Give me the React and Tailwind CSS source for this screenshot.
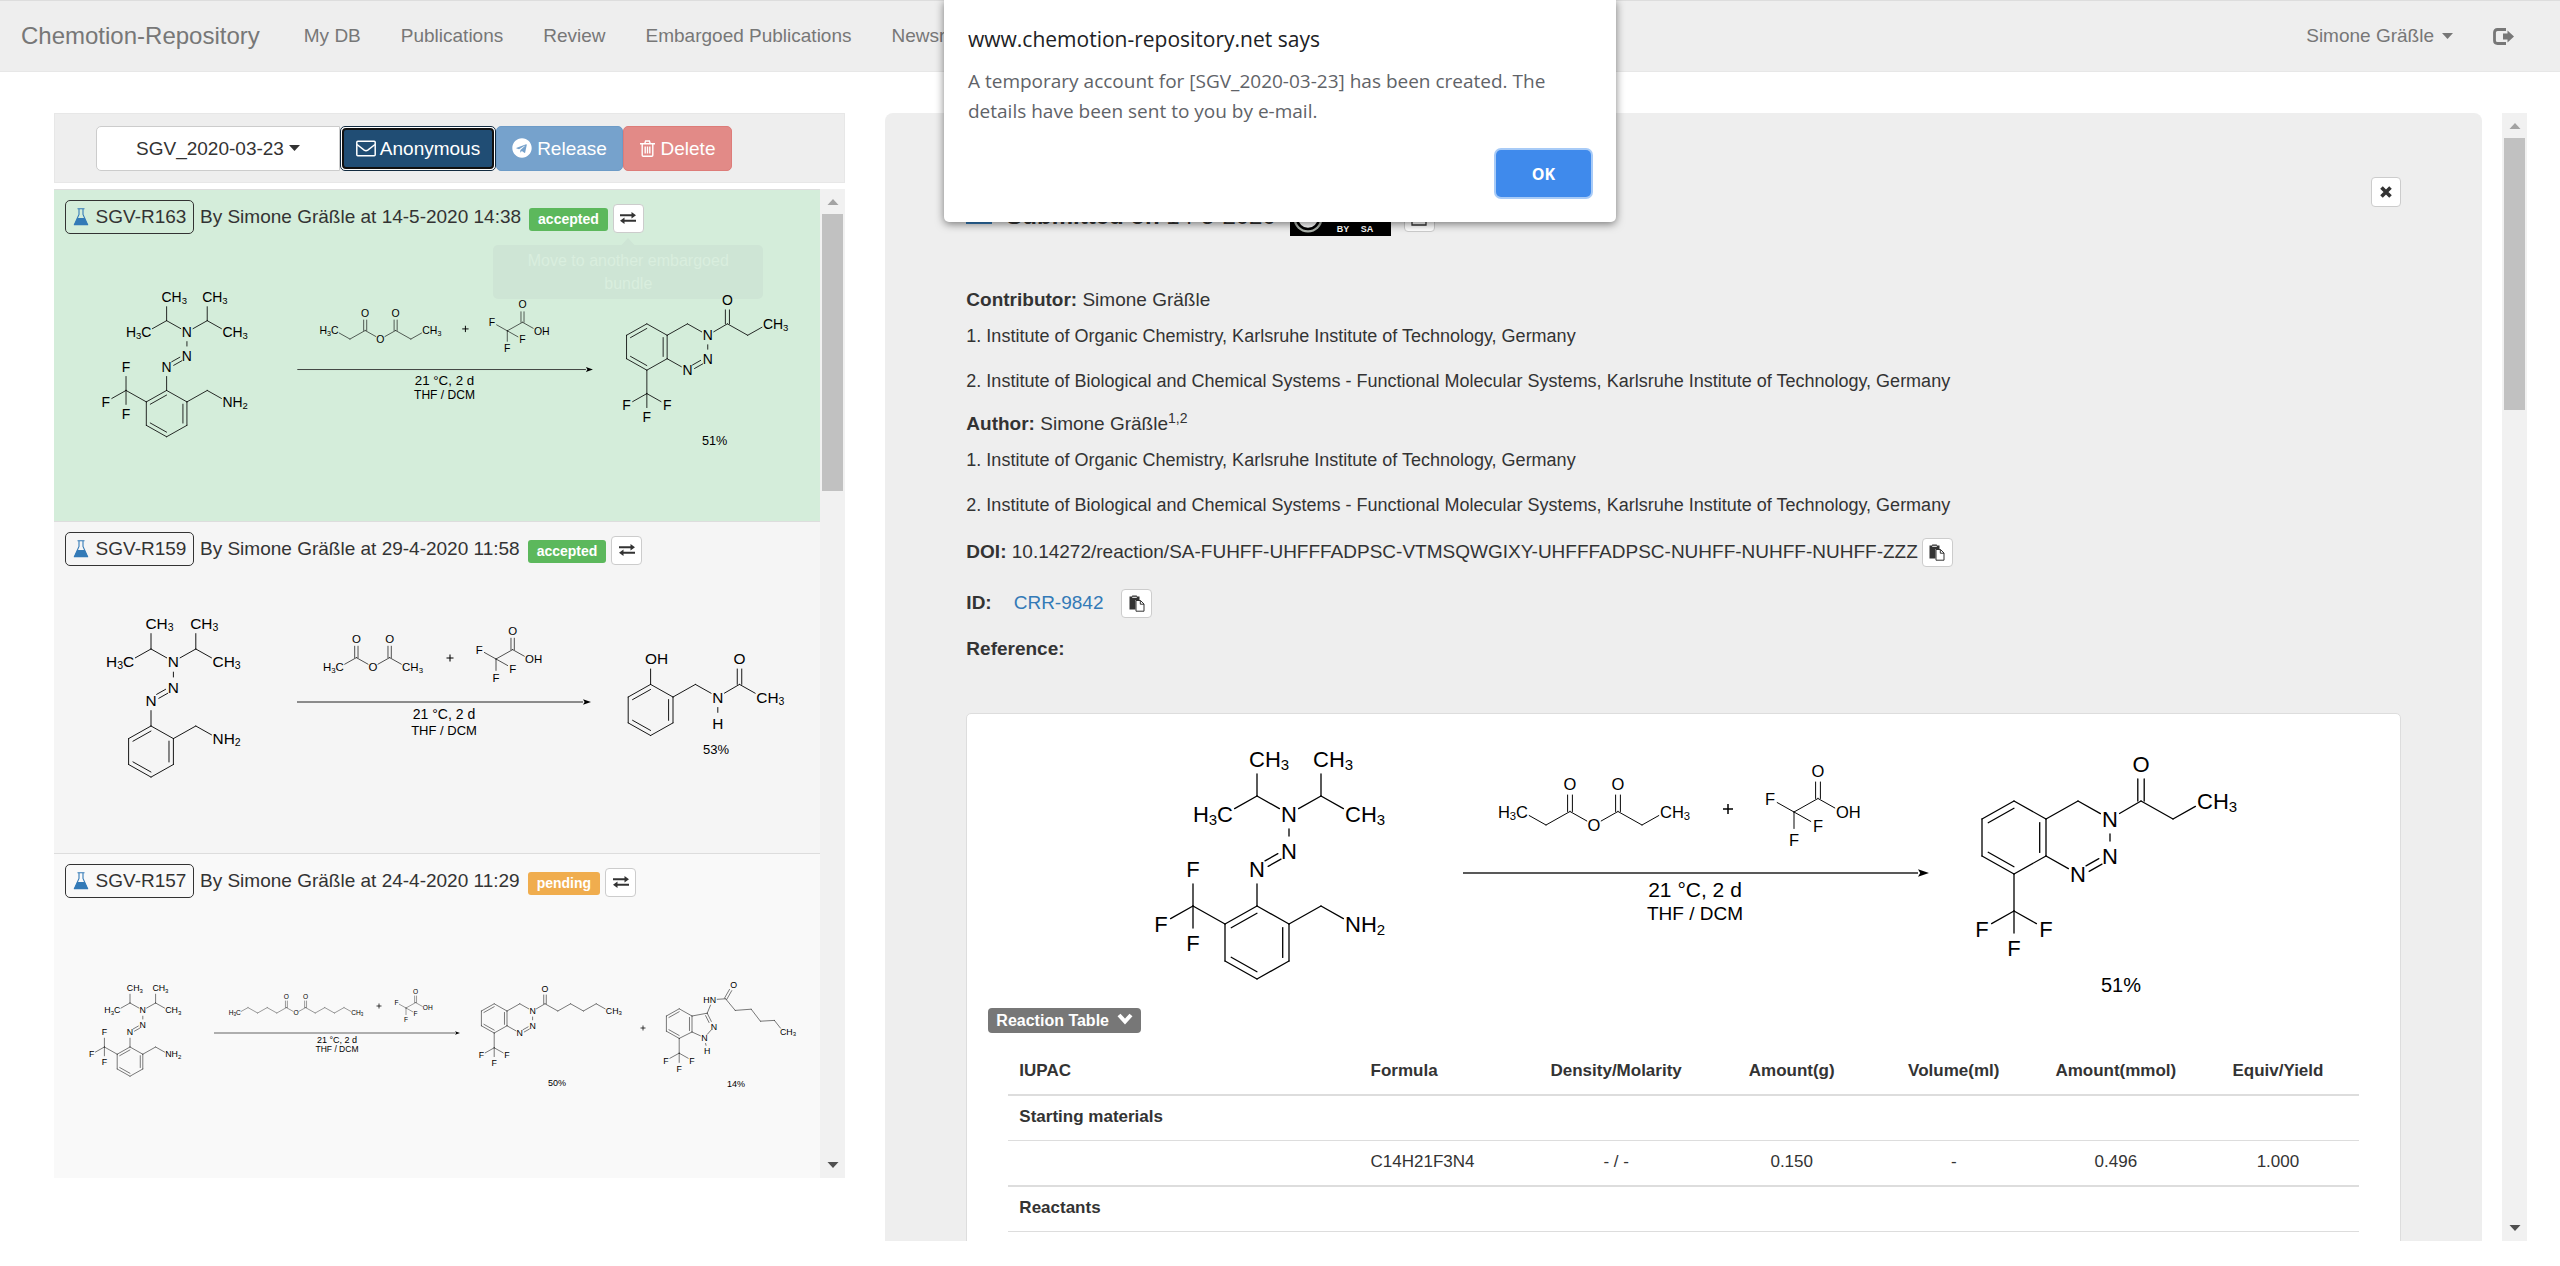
import React from "react";
import { FaTelegram } from "react-icons/fa";

/* ---------- skeletal formula drawing ---------- */

const DX = 32;
const H = 18;

// Atoms: [x, y, label]. Bonds: [from, to, kind]; kind "d" is a symmetric double
// bond, "r" a double bond with its second stroke on the right of its direction.
const triazene = {
  atoms: {
    c1: [0, 0], c2: [DX, H], c3: [DX, 55], c4: [0, 73], c5: [-DX, 55], c6: [-DX, H],
    n1: [0, -37, "N"], n2: [DX, -55, "N"], n3: [DX, -92, "N"],
    a: [0, -110], a1: [0, -147, "CH3"], a2: [-DX, -92, "H3C"],
    b: [64, -110], b1: [64, -147, "CH3"], b2: [96, -92, "CH3"],
    m: [64, 0], nh: [96, H, "NH2"],
  },
  bonds: [
    ["c6", "c1", "r"], ["c1", "c2"], ["c2", "c3", "r"], ["c3", "c4"], ["c4", "c5", "r"], ["c5", "c6"],
    ["c1", "n1"], ["n1", "n2", "d"], ["n2", "n3"], ["n3", "a"], ["a", "a1"], ["a", "a2"],
    ["n3", "b"], ["b", "b1"], ["b", "b2"], ["c2", "m"], ["m", "nh"],
  ],
};

const triazeneCF3 = {
  atoms: { ...triazene.atoms, f: [-64, 0], f1: [-64, -37, "F"], f2: [-96, H, "F"], f3: [-64, 37, "F"] },
  bonds: [...triazene.bonds, ["c6", "f"], ["f", "f1"], ["f", "f2"], ["f", "f3"]],
};

function anhydride(carbons) {
  const atoms = {
    o: [0, 0, "O"], l1: [-DX, -H], lo: [-DX, -55, "O"], r1: [DX, -H], ro: [DX, -55, "O"],
  };
  const bonds = [["o", "l1"], ["o", "r1"], ["l1", "lo", "d"], ["r1", "ro", "d"]];
  for (let i = 2; i <= carbons; i++) {
    const y = i % 2 ? -H : 0;
    const last = i === carbons;
    atoms["l" + i] = last ? [-DX * i, y, "H3C"] : [-DX * i, y];
    atoms["r" + i] = last ? [DX * i, y, "CH3"] : [DX * i, y];
    bonds.push(["l" + (i - 1), "l" + i], ["r" + (i - 1), "r" + i]);
  }
  return { atoms, bonds };
}

const tfa = {
  atoms: {
    c: [0, 0], c2: [DX, -H], o: [DX, -55, "O"], oh: [64, 0, "OH"],
    f1: [-DX, -H, "F"], f2: [DX, H, "F"], f3: [0, 37, "F"],
  },
  bonds: [["c", "c2"], ["c2", "o", "d"], ["c2", "oh"], ["c", "f1"], ["c", "f2"], ["c", "f3"]],
};

function benzotriazine(carbons) {
  const atoms = {
    c1: [0, 0], c2: [-DX, -H], c3: [-64, 0], c4: [-64, 37], c5: [-DX, 55], c6: [0, 37],
    m: [DX, -H], n1: [64, 0, "N"], n2: [64, 37, "N"], n3: [DX, 55, "N"],
    f: [-DX, 92], f1: [-64, 110, "F"], f2: [0, 110, "F"], f3: [-DX, 129, "F"],
    k1: [95, -H], ko: [95, -55, "O"],
  };
  const bonds = [
    ["c3", "c2", "r"], ["c2", "c1"], ["c1", "c6", "r"], ["c6", "c5"], ["c5", "c4", "r"], ["c4", "c3"],
    ["c1", "m"], ["m", "n1"], ["n1", "n2"], ["n2", "n3", "d"], ["n3", "c6"],
    ["c5", "f"], ["f", "f1"], ["f", "f2"], ["f", "f3"],
    ["n1", "k1"], ["k1", "ko", "d"],
  ];
  for (let i = 2; i <= carbons; i++) {
    const p = [95 + DX * (i - 1), i % 2 ? -H : 0];
    atoms["k" + i] = i === carbons ? [...p, "CH3"] : p;
    bonds.push(["k" + (i - 1), "k" + i]);
  }
  return { atoms, bonds };
}

const indazole = {
  atoms: {
    c1: [0, 0], c2: [-DX, -H], c3: [-64, 0], c4: [-64, 38], c5: [-DX, 56], c6: [0, 40],
    d: [38, -7], n2: [55, 27, "N"], n1: [31, 54, "N"], h: [38, 88, "H"],
    n: [52, -41, "HN"], k: [84, -43], ko: [104, -78, "O"],
    k2: [108, -14], k3: [148, -17], k4: [171, 13], k5: [206, 11], k6: [228, 39, "CH3"],
    f: [-DX, 93], f1: [-65, 111, "F"], f2: [0, 111, "F"], f3: [-DX, 131, "F"],
  },
  bonds: [
    ["c3", "c2", "r"], ["c2", "c1"], ["c1", "c6", "r"], ["c6", "c5"], ["c5", "c4", "r"], ["c4", "c3"],
    ["c1", "d"], ["d", "n2", "r"], ["n2", "n1"], ["n1", "c6"], ["n1", "h"],
    ["d", "n"], ["n", "k"], ["k", "ko", "d"], ["k", "k2"], ["k2", "k3"], ["k3", "k4"], ["k4", "k5"], ["k5", "k6"],
    ["c5", "f"], ["f", "f1"], ["f", "f2"], ["f", "f3"],
  ],
};

const hydroxybenzylAcetamide = {
  atoms: {
    c1: [0, 0], c2: [-DX, -H], c3: [-64, 0], c4: [-64, 37], c5: [-DX, 55], c6: [0, 37],
    oh: [-DX, -55, "OH"], m: [DX, -H], n: [64, 0, "N"], h: [64, 37, "H"],
    k: [95, -H], ko: [95, -55, "O"], k2: [127, 0, "CH3"],
  },
  bonds: [
    ["c3", "c2", "r"], ["c2", "c1"], ["c1", "c6", "r"], ["c6", "c5"], ["c5", "c4", "r"], ["c4", "c3"],
    ["c2", "oh"], ["c1", "m"], ["m", "n"], ["n", "h"], ["n", "k"], ["k", "ko", "d"], ["k", "k2"],
  ],
};

function AtomLabel({ x, y, label, s }) {
  const sub = { fontSize: 15 * s, dy: 3 * s };
  const base = { y: y + 8 * s, fontSize: 22 * s };
  if (label === "H3C" || label === "HN") {
    return (
      <text x={x + 8 * s} {...base} textAnchor="end">
        H{label === "H3C" && <tspan {...sub}>3</tspan>}
        <tspan dy={label === "H3C" ? -3 * s : 0}>{label === "H3C" ? "C" : "N"}</tspan>
      </text>
    );
  }
  if (label.length > 1) {
    return (
      <text x={x - 8 * s} {...base}>
        {label.slice(0, 2)}
        {label.length > 2 && <tspan {...sub}>{label.slice(2)}</tspan>}
      </text>
    );
  }
  return <text x={x} {...base} textAnchor="middle">{label}</text>;
}

function Molecule({ data, x, y, s = 1 }) {
  const lines = [];
  data.bonds.forEach(([from, to, kind]) => {
    const a = data.atoms[from];
    const b = data.atoms[to];
    const len = Math.hypot(b[0] - a[0], b[1] - a[1]);
    const ux = (b[0] - a[0]) / len;
    const uy = (b[1] - a[1]) / len;
    const trim = Math.abs(uy) > 0.85 ? 15 : 11;
    const ta = a[2] ? trim : 0;
    const tb = b[2] ? trim : 0;
    const seg = (off, cut) => {
      const ca = ta || cut;
      const cb = tb || cut;
      lines.push([
        a[0] + ux * ca - uy * off, a[1] + uy * ca + ux * off,
        b[0] - ux * cb - uy * off, b[1] - uy * cb + ux * off,
      ]);
    };
    if (kind === "d") {
      seg(-3.2, 0);
      seg(3.2, 0);
    } else {
      seg(0, 0);
      if (kind === "r") seg(6.3, 3.6);
    }
  });
  return (
    <g>
      <g stroke="#000" strokeWidth={1.3 * s} strokeLinecap="round">
        {lines.map((l, i) => (
          <line key={i} x1={x + l[0] * s} y1={y + l[1] * s} x2={x + l[2] * s} y2={y + l[3] * s} />
        ))}
      </g>
      {Object.entries(data.atoms).map(([id, [ax, ay, label]]) =>
        label ? <AtomLabel key={id} x={x + ax * s} y={y + ay * s} label={label} s={s} /> : null
      )}
    </g>
  );
}

function Plus({ x, y, r }) {
  return <path d={`M${x - r} ${y}h${2 * r}M${x} ${y - r}v${2 * r}`} stroke="#000" strokeWidth={r * 0.3} fill="none" />;
}

function Arrow({ x1, x2, y, head, width = 1.3 }) {
  return (
    <g>
      <path d={`M${x1} ${y}H${x2 - head}`} stroke="#222" strokeWidth={width} />
      <path d={`M${x2} ${y}l${-head} ${-head * 0.35}l${head * 0.2} ${head * 0.35}l${-head * 0.2} ${head * 0.35}z`} />
    </g>
  );
}

function Caption({ x, y, size, children }) {
  return <text x={x} y={y} fontSize={size} textAnchor="middle">{children}</text>;
}

function Scheme({ viewBox, className, title, children }) {
  return (
    <svg viewBox={viewBox} className={className} role="img" aria-label={title} fontFamily="'Liberation Sans', Arial, sans-serif">
      {children}
    </svg>
  );
}

function Scheme163({ viewBox, className }) {
  return (
    <Scheme viewBox={viewBox} className={className} title="Reaction SGV-R163">
      <Molecule data={triazeneCF3} x={1257} y={906} />
      <Molecule data={anhydride(3)} x={1594} y={825} s={0.75} />
      <Plus x={1728} y={809} r={5} />
      <Molecule data={tfa} x={1794} y={812} s={0.75} />
      <Arrow x1={1463} x2={1929} y={873} head={11} />
      <Caption x={1695} y={897} size={21}>21 °C, 2 d</Caption>
      <Caption x={1695} y={920} size={19}>THF / DCM</Caption>
      <Molecule data={benzotriazine(3)} x={2046} y={819} />
      <Caption x={2121} y={992} size={20}>51%</Caption>
    </Scheme>
  );
}

function Scheme159({ className }) {
  return (
    <Scheme viewBox="66 607 741 200" className={className} title="Reaction SGV-R159">
      <Molecule data={triazene} x={150} y={726} s={0.7} />
      <Molecule data={anhydride(2)} x={372} y={667} s={0.52} />
      <Plus x={449} y={658} r={3.5} />
      <Molecule data={tfa} x={495} y={659} s={0.52} />
      <Arrow x1={296} x2={590} y={702} head={8} width={1} />
      <Caption x={443} y={719} size={14}>21 °C, 2 d</Caption>
      <Caption x={443} y={735} size={13}>THF / DCM</Caption>
      <Molecule data={hydroxybenzylAcetamide} x={672} y={697} s={0.7} />
      <Caption x={715} y={754} size={13}>53%</Caption>
    </Scheme>
  );
}

function Scheme157({ className }) {
  return (
    <Scheme viewBox="66 939 741 200" className={className} title="Reaction SGV-R157">
      <Molecule data={triazeneCF3} x={129} y={1047} s={0.4} />
      <Molecule data={anhydride(6)} x={295} y={1013} s={0.3} />
      <Plus x={378} y={1006} r={2.5} />
      <Molecule data={tfa} x={405} y={1008} s={0.3} />
      <Arrow x1={213} x2={459} y={1033} head={5} width={0.7} />
      <Caption x={336} y={1043} size={9}>21 °C, 2 d</Caption>
      <Caption x={336} y={1052} size={8.5}>THF / DCM</Caption>
      <Molecule data={benzotriazine(6)} x={506} y={1011} s={0.4} />
      <Caption x={556} y={1086} size={9}>50%</Caption>
      <Plus x={642} y={1028} r={2.5} />
      <Molecule data={indazole} x={691} y={1016} s={0.4} />
      <Caption x={735} y={1087} size={9}>14%</Caption>
    </Scheme>
  );
}

/* ---------- icons ---------- */

const Caret = ({ className }) => (
  <svg viewBox="0 0 11 6" className={className} fill="currentColor" aria-hidden="true"><path d="M0 0h11L5.500 6z" /></svg>
);
const FlaskIcon = () => (
  <svg viewBox="0 0 16 18" className="h-[18px] w-4" aria-hidden="true">
    <path d="M4.500 .7h7M6 1v5.500L1.500 16.500h13L10 6.500V1" fill="none" stroke="#337ab7" strokeWidth="1.100" />
    <path d="M4.200 10h7.600L15.200 17.300H.8z" fill="#337ab7" />
  </svg>
);
const SwapIcon = () => (
  <svg viewBox="0 0 16 12" className="h-3 w-4" fill="#333" aria-hidden="true">
    <path d="M0 2.200h11.500V0L16 3.200l-4.500 3.200V4.200H0zM16 7.800H4.500V5.600L0 8.800 4.500 12V9.800H16z" />
  </svg>
);
const EnvelopeIcon = () => (
  <svg viewBox="0 0 20 17" className="h-[17px] w-5" fill="none" stroke="#fff" strokeWidth="1.500" aria-hidden="true">
    <rect x=".8" y="1.300" width="18.400" height="14.500" rx="1" />
    <path d="M1 4.500l7.200 5.700q1.800 1.200 3.600 0L19 4.500" />
  </svg>
);
const TrashIcon = () => (
  <svg viewBox="0 0 15 17" className="h-[17px] w-[15px]" fill="none" stroke="#fff" strokeWidth="1.400" aria-hidden="true">
    <path d="M0 3.700h15M4.800 3.500l.8-2.500h3.800l.8 2.500M2.200 4v11.200q0 1 1 1h8.600q1 0 1-1V4M5.200 6.500v7M7.500 6.500v7M9.800 6.500v7" />
  </svg>
);
const CopyIcon = () => (
  <svg viewBox="0 0 16 17" className="h-[17px] w-4" aria-hidden="true">
    <path d="M.5 1.500h2.300l.5-1h4.400l.5 1h2.300V5H6.500v9.500h-6z" fill="#333" />
    <path d="M3.200 2.300h4.600" stroke="#fff" strokeWidth="1" />
    <path d="M7 5.500h4.500L15 9v7.200H7z" fill="#fff" stroke="#333" />
    <path d="M11.300 5.500V9.200H15" fill="none" stroke="#333" />
  </svg>
);
const CloseIcon = () => (
  <svg viewBox="0 0 12 12" className="size-3" stroke="#333" strokeWidth="3.600" aria-hidden="true">
    <path d="M1.500 1.500l9 9M10.500 1.500l-9 9" />
  </svg>
);
const LogoutIcon = () => (
  <svg viewBox="0 0 21 17" className="h-[17px] w-[21px]" aria-hidden="true">
    <path d="M13 1.500H4.500q-3 0-3 3v8q0 3 3 3H13" fill="none" stroke="#777" strokeWidth="2.800" />
    <path d="M10 5.500h4.500V2.500L21 8.500l-6.500 6v-3H10z" fill="#777" />
  </svg>
);
const ChevronDown = () => (
  <svg viewBox="0 0 16 12" className="mb-1 h-3 w-4" fill="none" stroke="#fff" strokeWidth="4" aria-hidden="true">
    <path d="M2 2l6 6.500L14 2" />
  </svg>
);
const ExportIcon = () => (
  <svg viewBox="0 0 16 16" className="size-4" fill="none" stroke="#333" strokeWidth="1.300" aria-hidden="true">
    <path d="M1 5v10h14V5M8 1v9M5 7l3 3.500L11 7" />
  </svg>
);
const LicenseBadge = () => (
  <svg viewBox="0 0 101 36" className="h-9 w-[101px]" role="img" aria-label="CC BY-SA">
    <rect width="101" height="36" />
    <rect x="1" y="1" width="99" height="21" fill="#abb1aa" />
    <circle cx="18" cy="18" r="14.500" fill="#abb1aa" />
    <circle cx="18" cy="18" r="11" fill="#fff" stroke="#000" strokeWidth="2.500" />
    <circle cx="53" cy="12" r="8" fill="#fff" stroke="#000" strokeWidth="1.500" />
    <circle cx="77" cy="12" r="8" fill="#fff" stroke="#000" strokeWidth="1.500" />
    <path d="M53 6v11M74 9q5-4 6 3t-6 3" fill="none" stroke="#000" strokeWidth="2.500" />
    <text x="53" y="32" fontSize="9" fontWeight="bold" fill="#fff" textAnchor="middle">BY</text>
    <text x="77" y="32" fontSize="9" fontWeight="bold" fill="#fff" textAnchor="middle">SA</text>
  </svg>
);

/* ---------- page parts ---------- */

const smallButton = "flex h-[29px] w-[31px] items-center justify-center rounded-sm border border-[#ccc] bg-white";

function ScrollBar({ thumb }) {
  return (
    <div className="flex h-full w-[25px] shrink-0 flex-col items-center bg-[#f1f1f1] py-2.5" aria-hidden="true">
      <Caret className="h-1.5 w-3 rotate-180 text-[#a3a3a3]" />
      <div className={"mt-[9px] w-[21px] bg-[#c1c1c1] " + thumb} />
      <Caret className="mt-auto h-1.5 w-3 text-[#505050]" />
    </div>
  );
}

function NavBar() {
  return (
    <nav className="flex h-[71px] shrink-0 items-center gap-10 border-b border-[#e7e7e7] bg-[#eee] pr-[46px] pl-[21px] text-[19px] text-[#777]">
      <a href="#home" className="mr-1 text-[24px]">Chemotion-Repository</a>
      <a href="#mydb">My DB</a>
      <a href="#publications">Publications</a>
      <a href="#review">Review</a>
      <a href="#embargoed">Embargoed Publications</a>
      <a href="#newsroom">Newsroom</a>
      <button type="button" className="ml-auto flex items-center gap-2">
        Simone Gräßle <Caret className="h-1.5 w-[11px]" />
      </button>
      <a href="#logout" aria-label="Log out"><LogoutIcon /></a>
    </nav>
  );
}

function Toolbar() {
  return (
    <div className="flex h-[70px] shrink-0 items-center border border-[#e7e7e7] bg-[#eee] pl-[41px] text-[19px] leading-[27px]">
      <button type="button" className="flex h-[45px] w-[244px] items-center justify-center gap-[5px] rounded-l-[5px] border border-[#ccc] bg-white text-[#333]">
        SGV_2020-03-23 <Caret className="h-1.5 w-[11px]" />
      </button>
      <button type="button" className="flex h-[45px] w-[156px] items-center justify-center gap-1 rounded-[5px] border border-[#122b40] bg-white p-px text-white">
        <span className="flex h-full w-full items-center justify-center gap-1 rounded-[4px] border-2 border-[#101010] bg-[#204d74]">
          <EnvelopeIcon /> Anonymous
        </span>
      </button>
      <button type="button" className="flex h-[45px] w-[127px] items-center justify-center gap-[5px] rounded-[5px] border border-[#6d9bc7] bg-[#76a2cc] text-white">
        <FaTelegram className="size-5" /> Release
      </button>
      <button type="button" className="flex h-[45px] w-[109px] items-center justify-center gap-1.5 rounded-[5px] border border-[#dd7c79] bg-[#e28a87] text-white">
        <TrashIcon /> Delete
      </button>
    </div>
  );
}

function ReactionItem({ id, date, status, bg, tooltip, children }) {
  return (
    <article className={"h-[332px] shrink-0 border-t border-[#ddd] pt-2.5 " + bg}>
      <div className="flex h-[34px] items-center pl-[11px] text-[19px] text-[#333]">
        <a href={"#" + id} className="flex h-[34px] w-[129px] items-center justify-center gap-[7px] rounded-[5px] border border-[#333]">
          <FlaskIcon /> {id}
        </a>
        <span className="ml-1.5">By Simone Gräßle at {date}</span>
        <span className={"mt-[5px] ml-2 flex h-[23px] items-center rounded-[3px] px-[9px] text-[14px] font-bold text-white " + (status === "accepted" ? "bg-[#5cb85c]" : "bg-[#f0ad4e]")}>
          {status}
        </span>
        <div className="relative mt-0.5 ml-[5px]">
          <button type="button" aria-label="Move to another embargoed bundle" className={smallButton}><SwapIcon /></button>
          {tooltip && (
            <div role="tooltip" className="absolute top-[34px] left-1/2 flex w-[270px] -translate-x-1/2 flex-col items-center">
              <Caret className="h-[7px] w-3.5 rotate-180 text-[#cee5d5]" />
              <p className="w-full rounded-[5px] bg-[#cee5d5] px-4 py-1 text-center text-[16px] leading-[23px] text-[#d9eede]">{tooltip}</p>
            </div>
          )}
        </div>
      </div>
      <div className="relative z-10 mt-[41px] flex justify-center">{children}</div>
    </article>
  );
}

function ReactionList() {
  return (
    <div className="flex h-[989px]">
      <div className="flex min-w-0 flex-1 flex-col overflow-hidden">
        <ReactionItem id="SGV-R163" date="14-5-2020 14:38" status="accepted" bg="bg-[#d4edda]" tooltip="Move to another embargoed bundle">
          <Scheme163 viewBox="1100 724 1168 315" className="w-[741px] max-w-full" />
        </ReactionItem>
        <ReactionItem id="SGV-R159" date="29-4-2020 11:58" status="accepted" bg="bg-[#f5f5f5]">
          <Scheme159 className="w-[741px] max-w-full" />
        </ReactionItem>
        <ReactionItem id="SGV-R157" date="24-4-2020 11:29" status="pending" bg="bg-[#f9f9f9]">
          <Scheme157 className="w-[741px] max-w-full" />
        </ReactionItem>
      </div>
      <ScrollBar thumb="h-[277px]" />
    </div>
  );
}

const affiliations = [
  "1. Institute of Organic Chemistry, Karlsruhe Institute of Technology, Germany",
  "2. Institute of Biological and Chemical Systems - Functional Molecular Systems, Karlsruhe Institute of Technology, Germany",
];

function Affiliations() {
  return (
    <div className="mt-[11px] flex flex-col gap-[21px] text-[18px] leading-6">
      {affiliations.map((a) => <p key={a}>{a}</p>)}
    </div>
  );
}

const columns = [
  ["IUPAC", "w-[26%] text-left"],
  ["Formula", "w-[12%] text-left"],
  ["Density/Molarity", "w-[14%] text-center"],
  ["Amount(g)", "w-[12%] text-center"],
  ["Volume(ml)", "w-[12%] text-center"],
  ["Amount(mmol)", "w-[12%] text-center"],
  ["Equiv/Yield", "w-[12%] text-center"],
];
const starting = ["", "C14H21F3N4", "- / -", "0.150", "-", "0.496", "1.000"];

function ReactionTable() {
  return (
    <table className="w-full table-fixed border-separate border-spacing-0 text-[17px] leading-6">
      <thead>
        <tr>
          {columns.map(([name, cls]) => (
            <th key={name} scope="col" className={"border-b-2 border-[#ddd] px-[11px] pt-3 pb-[11px] font-bold " + cls}>{name}</th>
          ))}
        </tr>
      </thead>
      <tbody>
        <tr>
          <th colSpan={7} scope="colgroup" className="border-b border-[#ddd] px-[11px] pt-[9px] pb-[11px] text-left font-bold">Starting materials</th>
        </tr>
        <tr>
          {starting.map((v, i) => (
            <td key={i} className={"border-b-2 border-[#ddd] px-[11px] pt-[9px] pb-[11px] " + (i < 2 ? "text-left" : "text-center")}>{v}</td>
          ))}
        </tr>
        <tr>
          <th colSpan={7} scope="colgroup" className="border-b border-[#ddd] px-[11px] pt-[9px] pb-[11px] text-left font-bold">Reactants</th>
        </tr>
      </tbody>
    </table>
  );
}

function DetailPanel() {
  return (
    <section className="min-w-0 flex-1 overflow-hidden rounded-t-lg bg-[#eee] px-[81px] pt-16 text-[19px] leading-[27px] text-[#333]">
      <div className="flex h-[59px] items-start justify-between">
        <div className="mt-[23px] flex items-start text-[24px]">
          <span className="h-6 w-[26px] bg-[#337ab7]" />
          <h4 className="mt-0.5 ml-3.5"><b>Submitted on</b> 14-5-2020</h4>
          <span className="ml-3.5"><LicenseBadge /></span>
          <button type="button" aria-label="Export" className={smallButton + " mt-[3px] ml-[13px]"}><ExportIcon /></button>
        </div>
        <button type="button" aria-label="Close" className="flex size-[30px] items-center justify-center rounded-sm border border-[#ccc] bg-white"><CloseIcon /></button>
      </div>
      <p className="mt-[50px]"><b>Contributor:</b> Simone Gräßle</p>
      <Affiliations />
      <p className="mt-[17px]"><b>Author:</b> Simone Gräßle<sup className="text-[14px]">1,2</sup></p>
      <Affiliations />
      <div className="mt-[21px] flex gap-1">
        <p><b>DOI:</b> 10.14272/reaction/SA-FUHFF-UHFFFADPSC-VTMSQWGIXY-UHFFFADPSC-NUHFF-NUHFF-NUHFF-ZZZ</p>
        <button type="button" aria-label="Copy DOI" className={smallButton}><CopyIcon /></button>
      </div>
      <div className="mt-[22px] flex">
        <b>ID:</b>
        <a href="#CRR-9842" className="ml-[22px] text-[#337ab7]">CRR-9842</a>
        <button type="button" aria-label="Copy ID" className={smallButton + " ml-[18px]"}><CopyIcon /></button>
      </div>
      <p className="mt-[17px]"><b>Reference:</b></p>
      <div className="mt-[51px] h-[600px] rounded-[5px] border border-[#ddd] bg-white px-[21px] pt-2.5">
        <div className="flex justify-center">
          <Scheme163 viewBox="1100 724 1168 276" className="w-[1168px] max-w-full" />
        </div>
        <button type="button" className="mt-2 flex h-[25px] items-center gap-2 rounded-[4px] bg-[#777] px-2 text-[16px] font-bold text-white">
          Reaction Table <ChevronDown />
        </button>
        <div className="mt-3.5 pr-5 pl-5"><ReactionTable /></div>
      </div>
    </section>
  );
}

function AlertDialog() {
  return (
    <div role="alertdialog" aria-labelledby="alert-title" aria-describedby="alert-text"
      className="absolute top-0 left-1/2 z-20 flex h-[222px] w-[672px] -translate-x-1/2 flex-col rounded-b-[5px] bg-white pr-[25px] pl-6 font-['Open_Sans','Noto_Sans',sans-serif] shadow-[0_2px_8px_rgba(0,0,0,0.5)]">
      <h2 id="alert-title" className="mt-6 text-[21px] leading-[30px] text-[#202124]">www.chemotion-repository.net says</h2>
      <p id="alert-text" className="mt-3 w-[600px] text-[19px] leading-[30px] text-[#5f6368]">
        A temporary account for [SGV_2020-03-23] has been created. The details have been sent to you by e-mail.
      </p>
      <button type="button" className="mt-6 h-[47px] w-[95px] self-end rounded-[5px] bg-[#3f8aec] text-[16px] font-bold text-white ring-2 ring-[#a8cbf7]">OK</button>
    </div>
  );
}

export default function App() {
  return (
    <div className="relative flex h-screen flex-col overflow-hidden bg-white pb-[25px] font-['Liberation_Sans',Arial,sans-serif]">
      <div className="h-px shrink-0 border-b border-[#ddd]" />
      <NavBar />
      <main className="grid min-h-0 flex-1 grid-cols-[32%_1fr] gap-10 pt-[41px] pr-[33px] pl-[54px]">
        <div className="flex min-h-0 flex-col gap-1.5">
          <Toolbar />
          <ReactionList />
        </div>
        <div className="flex min-h-0 min-w-0 gap-5">
          <DetailPanel />
          <ScrollBar thumb="h-[272px]" />
        </div>
      </main>
      <AlertDialog />
    </div>
  );
}
